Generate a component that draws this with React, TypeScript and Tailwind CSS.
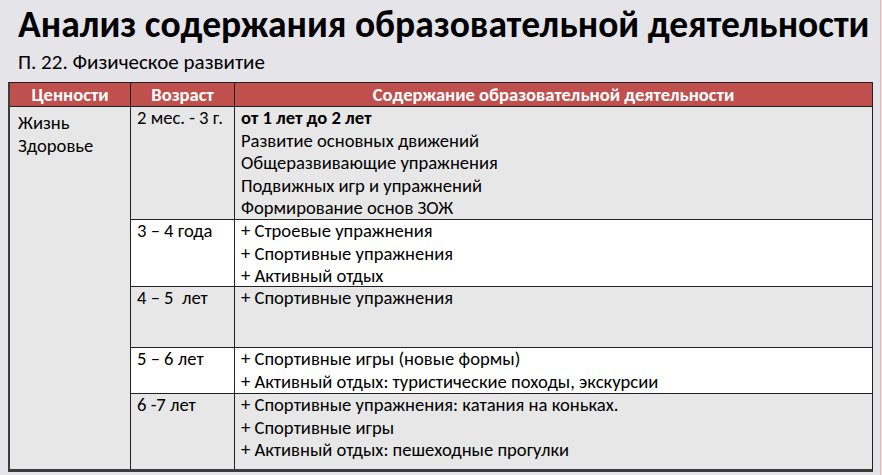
import React from "react";

const rows = [
  { age: "2 мес. - 3 г.", h: "h-[113px]", bg: "bg-[#e7e7e7]", lines: ["от 1 лет до 2 лет", "Развитие основных движений", "Общеразвивающие упражнения", "Подвижных игр и упражнений", "Формирование основ ЗОЖ"], bold0: true },
  { age: "3 – 4 года", h: "h-[67px]", bg: "bg-white", lines: ["+ Строевые упражнения", "+ Спортивные упражнения", "+ Активный отдых"] },
  { age: "4 – 5  лет", h: "h-[61px]", bg: "bg-[#e7e7e7]", lines: ["+ Спортивные упражнения"] },
  { age: "5 – 6 лет", h: "h-[46px]", bg: "bg-white", lines: ["+ Спортивные игры (новые формы)", "+ Активный отдых: туристические походы, экскурсии"] },
  { age: "6 -7 лет", h: "h-[75px]", bg: "bg-[#e7e7e7]", lines: ["+ Спортивные упражнения: катания на коньках.", "+ Спортивные игры", "+ Активный отдых: пешеходные прогулки"] },
];

export default function App() {
  return (
    <div className="w-[882px] h-[475px] bg-[#e4e4e9] relative overflow-hidden text-black" style={{ fontFamily: "Carlito, 'Open Sans', sans-serif" }}>
      <div className="absolute right-[1px] top-0 bottom-0 w-[1px] bg-[#f0b4b4]" />
      <div className="pl-[18px] pt-[3px]">
        <h1 className="text-[37.5px] leading-[42px] font-bold whitespace-nowrap">Анализ содержания образовательной деятельности</h1>
        <div className="text-[21px] leading-[26px] mt-[4px] whitespace-nowrap">П. 22. Физическое развитие</div>
      </div>
      <div className="ml-[8px] mt-[7px] w-[865px] border-l-2 border-b-[3px] border-t border-r border-t-[#222] border-r-[#222] border-l-[#3c3c3c] border-b-[#3c3c3c] text-[18.6px] leading-[22.6px] whitespace-nowrap">
        <div className="flex h-[24px] bg-[#c0504d] text-white font-bold border-b border-[#222] leading-[23px]">
          <div className="w-[121px] border-r border-[#222] text-center">Ценности</div>
          <div className="w-[104px] border-r border-[#222] text-center">Возраст</div>
          <div className="flex-1 text-center">Содержание образовательной деятельности</div>
        </div>
        <div className="flex">
          <div className="w-[121px] border-r border-[#222] bg-[#e7e7e7] pl-[8px] pt-[5px]">
            <div>Жизнь</div>
            <div>Здоровье</div>
          </div>
          <div className="flex-1 flex flex-col">
            {rows.map((r, i) => (
              <div key={i} className={`flex ${r.h} ${r.bg} ${i < rows.length - 1 ? "border-b border-[#222]" : ""}`}>
                <div className="w-[104px] border-r border-[#222] pl-[6px] whitespace-pre">{r.age}</div>
                <div className="flex-1 pl-[6px]">
                  {r.lines.map((l, j) => (
                    <div key={j} className={r.bold0 && j === 0 ? "font-bold" : ""}>{l}</div>
                  ))}
                </div>
              </div>
            ))}
          </div>
        </div>
      </div>
    </div>
  );
}
